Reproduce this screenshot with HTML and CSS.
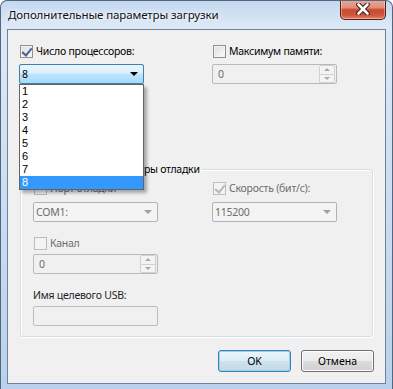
FILE: index.html
```html
<!DOCTYPE html>
<html lang="ru">
<head>
  <meta charset="UTF-8" />
  <title>Дополнительные параметры загрузки</title>
  <link rel="stylesheet" href="styles.css">
</head>
<body>
  <div class="window">
    <div class="titlebar">
      <span class="title">Дополнительные параметры загрузки</span>
      <button class="close" aria-label="Закрыть">
        <svg width="14" height="12" viewBox="0 0 14 12">
          <path d="M2.5 1.5 L11.5 10.5 M11.5 1.5 L2.5 10.5" stroke="#3b1a14" stroke-width="4.6" stroke-linecap="round" fill="none"/>
          <path d="M2.5 1.5 L11.5 10.5 M11.5 1.5 L2.5 10.5" stroke="#ffffff" stroke-width="2.6" stroke-linecap="round" fill="none"/>
        </svg>
      </button>
    </div>

    <div class="client">
      <div class="top">
        <div class="col">
          <label class="check"><span class="box checked"></span>Число процессоров:</label>
          <div class="combo focus">
            <span class="value">8</span>
            <span class="arrow"></span>
            <ul class="droplist">
              <li>1</li>
              <li>2</li>
              <li>3</li>
              <li>4</li>
              <li>5</li>
              <li>6</li>
              <li>7</li>
              <li class="sel">8</li>
            </ul>
          </div>
        </div>
        <div class="col">
          <label class="check"><span class="box"></span>Максимум памяти:</label>
          <div class="spin">
            <span class="value">0</span>
            <span class="spin-btns"><span class="up"></span><span class="down"></span></span>
          </div>
        </div>
      </div>

      <fieldset class="group">
        <legend>Глобальные параметры отладки</legend>
        <div class="group-body">
          <div class="col">
            <label class="check off"><span class="box"></span>Порт отладки</label>
            <div class="combo disabled"><span class="value">COM1:</span><span class="arrow"></span></div>
            <label class="check off gap-big"><span class="box"></span>Канал</label>
            <div class="spin">
              <span class="value">0</span>
              <span class="spin-btns"><span class="up"></span><span class="down"></span></span>
            </div>
            <div class="field-label">Имя целевого USB:</div>
            <div class="textbox"></div>
          </div>
          <div class="col">
            <label class="check off"><span class="box checked"></span>Скорость (бит/с):</label>
            <div class="combo disabled"><span class="value">115200</span><span class="arrow"></span></div>
          </div>
        </div>
      </fieldset>

      <div class="buttons">
        <button class="btn default">OK</button>
        <button class="btn">Отмена</button>
      </div>
    </div>
  </div>
</body>
</html>
```

FILE: styles.css
```css
html, body {
  margin: 0; padding: 0;
  font-family: 'Segoe UI', 'Noto Sans', sans-serif;
  font-size: 10.5px;
  letter-spacing: -0.25px;
  color: #000;
  background: #fff;
}
.window {
  width: 393px; height: 389px;
  box-sizing: border-box;
  border: 1px solid #55677d; border-bottom: 0;
  border-radius: 7px 7px 0 0;
  background: linear-gradient(#c3d8f0, #dde9f7 26px, #cfe0f3 40%, #b9d1ec 100%);
  display: flex; flex-direction: column;
  overflow: hidden;
}
/* title bar */
.titlebar {
  height: 28px;
  display: flex; justify-content: space-between; align-items: flex-start;
  padding: 0 6px 0 7px;
}
.title {
  margin-top: 6px;
  font-size: 11.5px; line-height: 16px;
  letter-spacing: -0.1px;
  color: #101010;
  text-shadow: 0 0 6px #fff, 0 0 3px #fff;
}
.close {
  margin-top: -1px;
  width: 46px; height: 20px;
  padding: 0;
  border: 1px solid #5a1d12; border-top: 0;
  border-radius: 0 0 5px 5px;
  background: linear-gradient(#e8ab9c 0%, #df8d77 40%, #c84a30 52%, #cd573b 80%, #df8564 100%);
  box-shadow: inset 0 0 0 1px rgba(255,255,255,0.35);
  display: flex; align-items: center; justify-content: center;
}
.close svg { display: block; margin-top: -1px; }
/* client area */
.client {
  flex: 1;
  margin: 0 6px 5px 6px;
  border: 1px solid #6f8296;
  background: #f0f0f0;
  display: flex; flex-direction: column;
}
.top {
  display: grid;
  grid-template-columns: 125px 125px;
  column-gap: 68px;
  padding: 14px 0 0 11px;
}
.col { display: flex; flex-direction: column; }
/* checkboxes */
.check {
  display: flex; align-items: center;
  height: 14px; line-height: 14px;
  margin-left: 1px;
  white-space: nowrap;
}
.box {
  width: 13px; height: 13px;
  box-sizing: border-box;
  border: 1px solid #8e8f8f;
  background: linear-gradient(135deg, #dcdcdc, #fbfbfb);
  box-shadow: inset 0 0 0 1px #f4f4f4;
  margin-right: 3px;
  position: relative;
}
.box.checked::after {
  content: '';
  position: absolute; left: 3px; top: 0px;
  width: 4px; height: 8px;
  border: solid #4a5f97; border-width: 0 2px 2px 0;
  transform: rotate(40deg);
}
.check.off { color: #6d6d6d; }
.check.off .box {
  border-color: #bcbcbc;
  background: #f4f4f4;
  box-shadow: none;
}
.check.off .box.checked::after { border-color: #b8b8b8; }
.gap-big { margin-top: 14px; }
/* combo boxes */
.combo {
  position: relative;
  margin-top: 6px;
  height: 20px; box-sizing: border-box;
  border: 1px solid #adb2b5; border-radius: 2px;
  background: #f4f4f4;
  display: flex; align-items: center;
  padding-left: 2px;
}
.combo .arrow {
  margin-left: auto; margin-right: 5px;
  width: 0; height: 0;
  border-top: 4px solid #000;
  border-left: 4px solid transparent; border-right: 4px solid transparent;
}
.combo.focus {
  border-color: #3c7fb1;
  background: linear-gradient(#eaf6fd 0%, #d9f0fc 45%, #bee6fd 50%, #a7d9f5 100%);
}
.combo.disabled { color: #6d6d6d; }
.combo.disabled .arrow { border-top-color: #a0a0a0; }
.droplist {
  position: absolute; top: 19px; left: -1px;
  width: 125px; box-sizing: border-box;
  margin: 0; padding: 0; list-style: none;
  border: 1px solid #646464;
  background: #fff;
  box-shadow: 3px 3px 3px rgba(0,0,0,0.3);
  z-index: 10;
  font-family: 'Liberation Sans', Arial, sans-serif;
  font-size: 11px; letter-spacing: 0;
}
.droplist li {
  height: 13px; line-height: 13px;
  padding-left: 2px;
}
.droplist li.sel { background: #3399ff; color: #fff; }
/* spin boxes */
.spin {
  margin-top: 6px;
  height: 20px; box-sizing: border-box;
  border: 1px solid #b9b9b9; border-radius: 2px;
  background: #f0f0f0;
  color: #6d6d6d;
  display: flex; align-items: center;
  padding-left: 5px;
}
.spin-btns {
  margin-left: auto; margin-right: 1px;
  width: 16px; height: 18px;
  display: flex; flex-direction: column;
}
.spin-btns span {
  flex: 1;
  border: 1px solid #d0d0d0;
  background: #f4f4f4;
  display: flex; align-items: center; justify-content: center;
}
.spin-btns .up { border-radius: 2px 2px 0 0; }
.spin-btns .down { border-radius: 0 0 2px 2px; border-top: 0; }
.spin-btns .up::after, .spin-btns .down::after {
  content: ''; width: 0; height: 0;
  border-left: 3px solid transparent; border-right: 3px solid transparent;
}
.spin-btns .up::after { border-bottom: 3px solid #a8a8a8; }
.spin-btns .down::after { border-top: 3px solid #a8a8a8; }
/* group box */
.group {
  margin: 78px 0 0 12px;
  width: 353px; box-sizing: border-box;
  padding: 5px 0 10px 12px;
  border: 1px solid #d5dfe5; border-radius: 3px;
  box-shadow: inset 1px 1px 0 #fff, 1px 1px 0 #fff;
}
.group legend {
  margin-left: 6px;
  padding: 0 2px;
  line-height: 14px;
}
.group-body {
  display: grid;
  grid-template-columns: 125px 125px;
  column-gap: 54px;
  align-items: start;
}
.group-body .combo { margin-top: 7px; }
.group-body .spin { margin-top: 4px; }
.field-label { margin-top: 14px; line-height: 14px; color: #1e1e1e; }
.textbox {
  margin-top: 4px;
  height: 20px; box-sizing: border-box;
  border: 1px solid #bdbdbd; border-radius: 2px;
  background: #f0f0f0;
}
/* buttons */
.buttons {
  display: flex; justify-content: flex-end; gap: 10px;
  margin-top: 13px;
  padding-right: 11px;
}
.btn {
  width: 73px; height: 22px;
  font: inherit; color: #000;
  border: 1px solid #707070; border-radius: 3px;
  background: linear-gradient(#f2f2f2 0%, #ebebeb 49%, #dddddd 50%, #cfcfcf 100%);
  box-shadow: inset 0 0 0 1px #fcfcfc;
  padding: 0;
}
.btn.default {
  border-color: #3c7fb1;
  background: linear-gradient(#eaf6fd 0%, #dcecf5 49%, #cfe2ee 50%, #c3d9e8 100%);
  box-shadow: inset 0 0 0 1px #97d3f0;
}
```
